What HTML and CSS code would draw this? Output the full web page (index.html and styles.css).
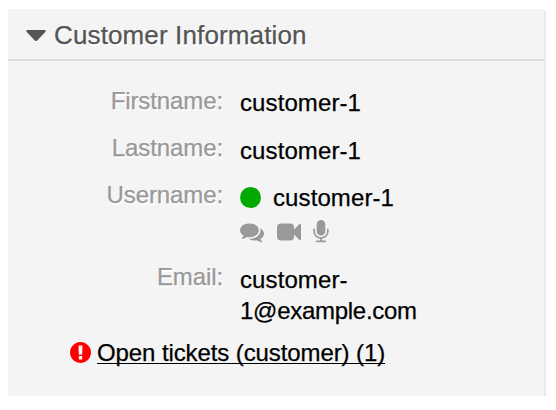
FILE: index.html
```
<!DOCTYPE html>
<html lang="en">
<head>
<meta charset="utf-8">
<title>Customer Information</title>
<link rel="stylesheet" href="styles.css">
</head>
<body>
<section class="widget">
  <header class="header">
    <svg class="caret" viewBox="0 0 20 12"><path d="M1.2 0H18.8Q20.4 .5 19.3 2L11.2 10.4Q10 11.6 8.8 10.4L.7 2Q-.4 .5 1.2 0Z"/></svg>
    <h2 class="title">Customer Information</h2>
  </header>
  <dl class="details">
    <dt class="label">Firstname:</dt>
    <dd class="value first">customer-1</dd>
    <dt class="label">Lastname:</dt>
    <dd class="value">customer-1</dd>
    <dt class="label">Username:</dt>
    <dd class="value">
      <div class="user"><span class="status"></span><span>customer-1</span></div>
      <div class="actions">
        <svg class="icon" viewBox="0 0 1792 1792"><path d="M1408 768q0 139-94 257t-256.5 186.5-353.5 68.5q-86 0-176-16-124 88-278 128-36 9-86 16h-3q-11 0-20.5-8t-11.5-21q-1-3-1-6.5t.5-6.5 2-6l2.5-5 3.5-5.5 4-5 4.5-5 4-4.5q5-6 23-25t26-29.5 22.5-29 25-38.5 20.5-44q-124-72-195-177t-71-224q0-139 94-257t256.5-186.5 353.5-68.5 353.5 68.5 256.5 186.5 94 257zm384 256q0 120-71 224.5t-195 176.5q10 24 20.5 44t25 38.5 22.5 29 26 29.5 23 25q1 1 4 4.5t4.5 5 4 5 3.5 5.5l2.5 5 2 6 .5 6.5-1 6.5q-3 14-13 22t-22 7q-50-7-86-16-154-40-278-128-90 16-176 16-271 0-472-132 58 4 88 4 161 0 309-45t264-129q125-92 192-212t67-254q0-77-23-152 129 71 204 178t75 230z"/></svg>
        <svg class="icon video" viewBox="0 0 1792 1792"><path d="M1792 352v1088q0 42-39 59-13 5-25 5-27 0-45-19l-403-403v166q0 119-84.5 203.5t-203.5 84.5h-704q-119 0-203.5-84.5t-84.5-203.5v-704q0-119 84.5-203.5t203.5-84.5h704q119 0 203.5 84.5t84.5 203.5v165l403-402q18-19 45-19 12 0 25 5 39 17 39 59z"/></svg>
        <svg class="icon mic" viewBox="320 0 1152 1792"><path d="M1472 704v128q0 221-147.5 384.5t-364.5 187.5v132h256q26 0 45 19t19 45-19 45-45 19h-640q-26 0-45-19t-19-45 19-45 45-19h256v-132q-217-24-364.5-187.5t-147.5-384.5v-128q0-26 19-45t45-19 45 19 19 45v128q0 185 131.5 316.5t316.5 131.5 316.5-131.5 131.5-316.5v-128q0-26 19-45t45-19 45 19 19 45zm-256-384v512q0 132-94 226t-226 94-226-94-94-226v-512q0-132 94-226t226-94 226 94 94 226z"/></svg>
      </div>
    </dd>
    <dt class="label">Email:</dt>
    <dd class="value">customer-<wbr><span class="domain">1@example.com</span></dd>
  </dl>
  <div class="tickets">
    <svg class="alert" viewBox="128 128 1536 1536"><path d="M896 128q209 0 385.5 103t279.5 279.5 103 385.5-103 385.5-279.5 279.5-385.5 103-385.5-103-279.5-279.5-103-385.5 103-385.5 279.5-279.5 385.5-103zm128 1247v-190q0-14-9-23.5t-22-9.5h-192q-13 0-23 10t-10 23v190q0 13 10 23t23 10h192q13 0 22-9.5t9-23.5zm-2-344l18-621q0-12-10-18-10-8-24-8h-220q-14 0-24 8-10 6-10 18l17 621q0 10 10 17.5t24 7.5h185q14 0 23.5-7.5t10.5-17.5z"/></svg>
    <a class="link" href="#">Open tickets (customer) (1)</a>
  </div>
</section>
</body>
</html>
```
FILE: styles.css
```
* {
  box-sizing: border-box;
}

body {
  margin: 0;
  padding: 9px 0 0 8px;
  background: #fff;
  color: #000;
  font: 24px/31px "Liberation Sans", Arial, sans-serif;
  -webkit-text-stroke: 0.25px currentColor;
}

.widget {
  width: 536px;
  height: 387px;
  background: #f4f4f4;
  box-shadow: 2px 2px 0 #e8e8e8;
}

.header {
  display: flex;
  align-items: center;
  gap: 8px;
  height: 52px;
  padding-left: 18px;
  border-bottom: 2px solid #dcdcdc;
}

.caret {
  width: 20px;
  height: 12px;
  margin-top: 3px;
  fill: #555;
}

.title {
  margin: 2px 0 0;
  color: #555;
  font-size: 26px;
  font-weight: 400;
  letter-spacing: 0.13px;
  text-shadow: 1px 2px 0 #fff;
}

.details {
  display: grid;
  grid-template-columns: 215px 200px;
  column-gap: 17px;
  row-gap: 13px;
  margin: 0;
  padding-top: 24px;
}

.label {
  color: #999;
  text-align: right;
  text-shadow: 1px 2px 0 #fff;
  letter-spacing: -0.1px;
}

.value {
  margin: 0;
  padding-top: 3px;
  letter-spacing: 0.1px;
}

.first {
  padding: 2px 0 1px;
}

.domain {
  letter-spacing: -0.28px;
}

.user {
  display: flex;
  align-items: center;
  gap: 12px;
}

.status {
  width: 21px;
  height: 21px;
  border-radius: 50%;
  background: #0a0;
}

.actions {
  display: flex;
  margin: 7px 0 4px;
}

.icon {
  width: 24px;
  height: 24px;
  fill: #999;
}

.video {
  margin-left: 13px;
}

.mic {
  width: 16px;
  margin-left: 12px;
}

.tickets {
  display: flex;
  align-items: center;
  gap: 6px;
  margin-top: 11px;
  padding-left: 62px;
}

.alert {
  width: 21px;
  height: 21px;
  fill: #f00;
}

.link {
  color: #000;
  letter-spacing: -0.1px;
  text-decoration-thickness: 1px;
  text-underline-offset: 2px;
  text-decoration-skip-ink: none;
}
```
